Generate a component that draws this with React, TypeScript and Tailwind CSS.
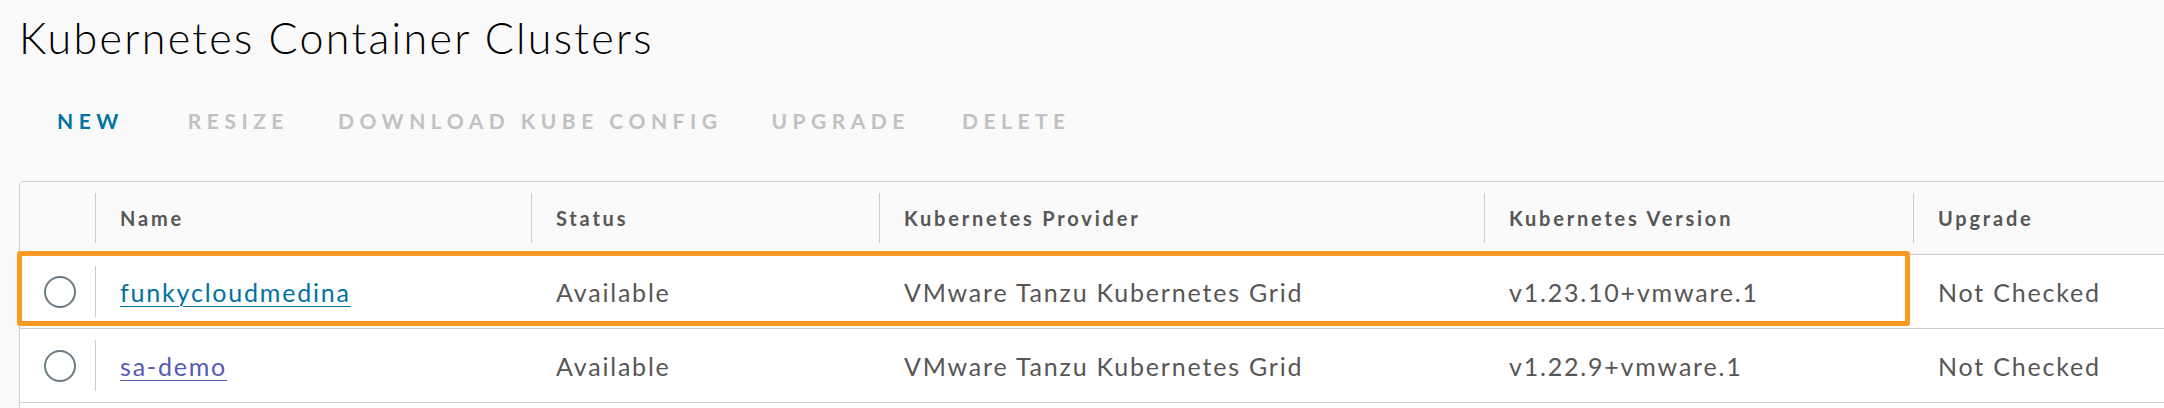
import React from "react";

const font = { fontFamily: "Lato, 'Liberation Sans', sans-serif" };

type Row = { name: string; visited?: boolean; status: string; provider: string; version: string; upgrade: string };

const rows: Row[] = [
  { name: "funkycloudmedina", status: "Available", provider: "VMware Tanzu Kubernetes Grid", version: "v1.23.10+vmware.1", upgrade: "Not Checked" },
  { name: "sa-demo", visited: true, status: "Available", provider: "VMware Tanzu Kubernetes Grid", version: "v1.22.9+vmware.1", upgrade: "Not Checked" },
];

function HeaderCell({ w, label }: { w: string; label: string }) {
  return (
    <div className={`flex items-center ${w}`}>
      <span className="h-[50px] w-px bg-[#cccccc]" />
      <span className="pl-6 text-[20px] font-bold tracking-[2.8px] text-[#565656]">{label}</span>
    </div>
  );
}

function Cell({ w, children }: { w: string; children: React.ReactNode }) {
  return <div className={`flex items-center pl-[25px] ${w}`}>{children}</div>;
}

export default function App() {
  return (
    <div className="relative h-[408px] w-[2164px] overflow-hidden bg-[#fafafa]" style={font}>
      <h1 className="ml-[19px] mt-[12px] h-[52px] text-[43px] font-light leading-[52px] tracking-[2.3px] text-black">
        Kubernetes Container Clusters
      </h1>

      <div className="mt-[45px] flex h-[24px] items-center pl-[57px] text-[21px] font-bold leading-[24px] tracking-[5.5px]">
        <span className="mr-[64px] text-[#0072a3]">NEW</span>
        <span className="mr-[49px] text-[#c1c1c1]">RESIZE</span>
        <span className="mr-[49px] text-[#c1c1c1]">DOWNLOAD KUBE CONFIG</span>
        <span className="mr-[52px] text-[#c1c1c1]">UPGRADE</span>
        <span className="text-[#c1c1c1]">DELETE</span>
      </div>

      <div className="ml-[19px] mt-[48px] w-[2160px] rounded-tl-[4px] border border-[#cccccc]">
        <div className="flex h-[73px] border-b border-[#cccccc] bg-[#fafafa]">
          <div className="w-[75px]" />
          <HeaderCell w="w-[436px]" label="Name" />
          <HeaderCell w="w-[348px]" label="Status" />
          <HeaderCell w="w-[605px]" label="Kubernetes Provider" />
          <HeaderCell w="w-[429px]" label="Kubernetes Version" />
          <HeaderCell w="flex-1" label="Upgrade" />
        </div>
        {rows.map((r) => (
          <div key={r.name} className="flex h-[74px] border-b border-[#cccccc] bg-white text-[25px] leading-[30px] tracking-[1.8px] text-[#565656]">
            <div className="flex w-[75px] items-center pl-[24px]">
              <span className="h-[32px] w-[32px] rounded-full border-2 border-[#6b7b84] bg-white" />
            </div>
            <div className="flex w-[436px] items-center">
              <span className="h-[51px] w-px bg-[#cccccc]" />
              <a href="#" className={`pl-6 underline decoration-1 underline-offset-[4px] ${r.visited ? "text-[#5659b6]" : "text-[#0072a3]"}`}>
                {r.name}
              </a>
            </div>
            <Cell w="w-[348px]">{r.status}</Cell>
            <Cell w="w-[605px]">{r.provider}</Cell>
            <Cell w="w-[429px]">{r.version}</Cell>
            <Cell w="flex-1">{r.upgrade}</Cell>
          </div>
        ))}
        <div className="h-[74px] bg-white" />
      </div>

      <div className="pointer-events-none absolute left-[17px] top-[251px] h-[75px] w-[1893px] rounded-[3px] border-[5px] border-[#fb9a22]" />
    </div>
  );
}
